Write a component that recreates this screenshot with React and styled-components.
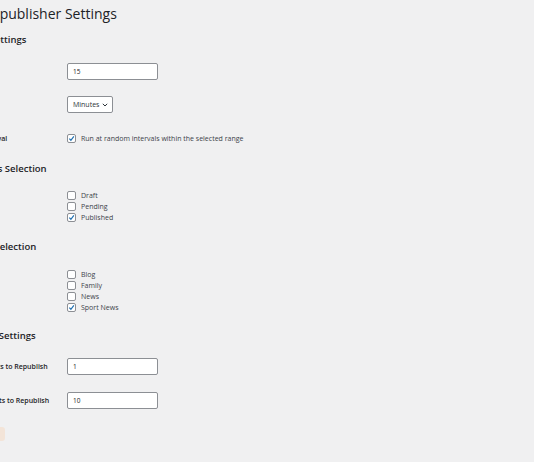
import React from "react";
import styled, { createGlobalStyle } from "styled-components";

const Global = createGlobalStyle`
  html, body { margin: 0; background: #f0f0f1; overflow: hidden; }
  body { font-family: "Open Sans", "Noto Sans", sans-serif; color: #1d2327; }
`;

const Page = styled.div`
  margin-left: -49px;
  padding-top: 4px;
  width: 600px;
`;

const Title = styled.h1`
  font-size: 14px;
  font-weight: 400;
  margin: 0 0 9px;
  line-height: 20px;
`;

const Heading = styled.h2`
  font-size: 9.5px;
  font-weight: 600;
  margin: 0;
  line-height: 14px;
`;

const Table = styled.div`
  display: grid;
  grid-template-columns: 116px 1fr;
  row-gap: ${(p) => p.$gap || 14}px;
  margin: ${(p) => p.$mt}px 0 ${(p) => p.$mb}px;
  align-items: start;
`;

const Label = styled.div`
  font-size: 7px;
  font-weight: 600;
  line-height: ${(p) => p.$lh || 17}px;
  margin-top: ${(p) => p.$mt || 0}px;
`;

const Field = styled.div`
  display: flex;
  margin-top: ${(p) => p.$mt || 0}px;
`;

const Input = styled.div`
  width: 84px;
  height: 15px;
  background: #fff;
  border: 1px solid #8c8f94;
  border-radius: 2px;
  font-size: 6.5px;
  line-height: 15px;
  padding-left: 5px;
`;

const Select = styled.div`
  display: inline-flex;
  align-items: center;
  gap: 3px;
  height: 15px;
  padding: 0 4px 0 5px;
  background: #fff;
  border: 1px solid #8c8f94;
  border-radius: 2px;
  font-size: 7px;
  color: #2c3338;
`;

const Checks = styled.div`
  display: flex;
  flex-direction: column;
  gap: 2px;
`;

const CheckRow = styled.label`
  display: flex;
  align-items: center;
  gap: 5px;
  font-size: 7px;
  line-height: 9px;
  color: #3c434a;
`;

const Box = styled.span`
  width: 7px;
  height: 7px;
  border: 1px solid #8c8f94;
  border-radius: 2px;
  background: #fff;
  display: inline-flex;
  align-items: center;
  justify-content: center;
`;

const Check = ({ on, children }) => (
  <CheckRow>
    <Box>
      {on && (
        <svg width="7" height="7" viewBox="0 0 8 8">
          <path d="M1.5 4.2 L3.3 6 L6.7 1.6" fill="none" stroke="#2271b1" strokeWidth="1.4" />
        </svg>
      )}
    </Box>
    {children}
  </CheckRow>
);

const Chevron = () => (
  <svg width="6" height="4" viewBox="0 0 6 4">
    <path d="M0.8 0.8 L3 3 L5.2 0.8" fill="none" stroke="#2c3338" strokeWidth="1" />
  </svg>
);

const Save = styled.div`
  margin-top: 18px;
  width: 54px;
  height: 14px;
  border-radius: 3px;
  background: #f3e4d8;
`;

export default function App() {
  return (
    <>
      <Global />
      <Page>
        <Title>Post Republisher Settings</Title>
        <Heading>General Settings</Heading>
        <Table $mt={16} $gap={16} $mb={19}>
          <Label>Interval</Label>
          <Field><Input>15</Input></Field>
          <Label>Time Unit</Label>
          <Field><Select>Minutes <Chevron /></Select></Field>
          <Label $lh={9} $mt={5}>Random Interval</Label>
          <Field $mt={5}><Check on>Run at random intervals within the selected range</Check></Field>
        </Table>
        <Heading>Post Status Selection</Heading>
        <Table $mt={15} $mb={18}>
          <Label $lh={9}>Post Statuses</Label>
          <Checks>
            <Check>Draft</Check>
            <Check>Pending</Check>
            <Check on>Published</Check>
          </Checks>
        </Table>
        <Heading>Category Selection</Heading>
        <Table $mt={16} $mb={17}>
          <Label $lh={9}>Categories</Label>
          <Checks>
            <Check>Blog</Check>
            <Check>Family</Check>
            <Check>News</Check>
            <Check on>Sport News</Check>
          </Checks>
        </Table>
        <Heading>Republish Settings</Heading>
        <Table $mt={15} $gap={17} $mb={0}>
          <Label>Minimum Posts to Republish</Label>
          <Field><Input>1</Input></Field>
          <Label>Maximum Posts to Republish</Label>
          <Field><Input>10</Input></Field>
        </Table>
        <Save />
      </Page>
    </>
  );
}
